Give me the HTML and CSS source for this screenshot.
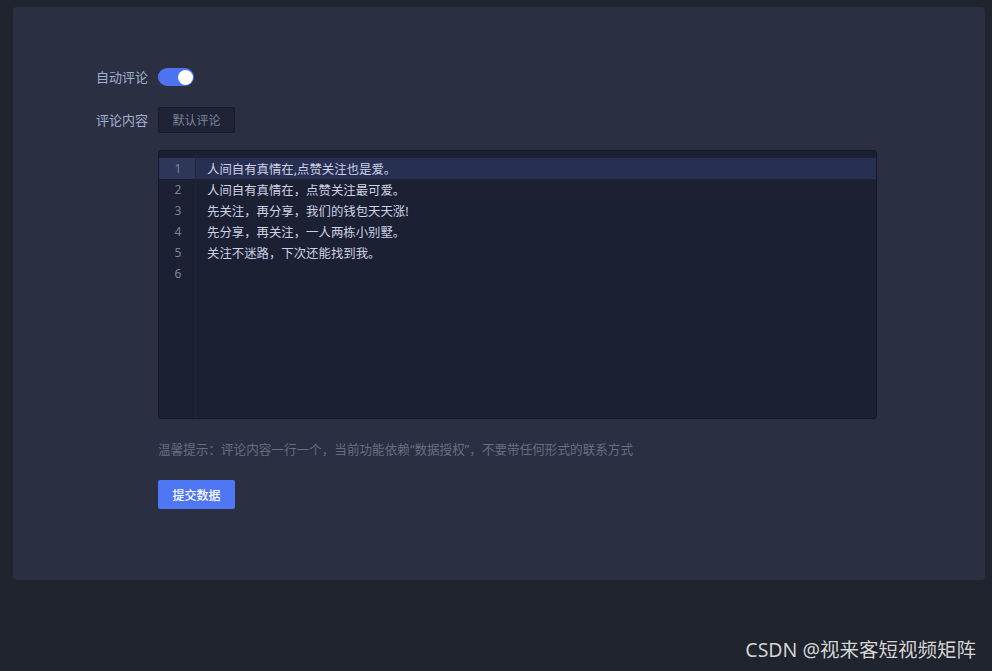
FILE: index.html
```html
<!DOCTYPE html>
<html lang="zh-CN">
<head>
<meta charset="utf-8">
<title>自动评论</title>
<link rel="stylesheet" href="styles.css">
</head>
<body>
<div class="card">
  <div class="form-row row-switch">
    <label class="label">自动评论</label>
    <div class="switch on"><span class="knob"></span></div>
  </div>
  <div class="form-row row-default">
    <label class="label">评论内容</label>
    <button class="btn-default">默认评论</button>
  </div>
  <div class="form-row row-editor">
    <div class="editor">
      <div class="gutter">
        <div class="ln active">1</div>
        <div class="ln">2</div>
        <div class="ln">3</div>
        <div class="ln">4</div>
        <div class="ln">5</div>
        <div class="ln">6</div>
      </div>
      <div class="lines">
        <div class="line active">人间自有真情在,点赞关注也是爱。</div>
        <div class="line">人间自有真情在，点赞关注最可爱。</div>
        <div class="line">先关注，再分享，我们的钱包天天涨!</div>
        <div class="line">先分享，再关注，一人两栋小别墅。</div>
        <div class="line">关注不迷路，下次还能找到我。</div>
        <div class="line"></div>
      </div>
    </div>
  </div>
  <div class="form-row row-hint">
    <p class="hint">温馨提示：评论内容一行一个，当前功能依赖“数据授权”，不要带任何形式的联系方式</p>
  </div>
  <div class="form-row row-submit">
    <button class="btn-primary">提交数据</button>
  </div>
</div>
<div class="watermark">CSDN @视来客短视频矩阵</div>
</body>
</html>
```

FILE: styles.css
```css
* { box-sizing: border-box; }
html, body {
  margin: 0;
  padding: 0;
  background: #20242f;
  font-family: "Noto Sans", "Noto Sans CJK SC", sans-serif;
  width: 992px;
  height: 671px;
  overflow: hidden;
}
.card {
  margin: 7px 7px 0 13px;
  height: 573px;
  background: #2a2f42;
  border-radius: 4px;
  padding: 54px 0 0 0;
}
.form-row {
  display: flex;
  align-items: center;
  padding-left: 145px;
}
.label {
  width: 135px;
  margin-left: -135px;
  padding-right: 10px;
  text-align: right;
  font-size: 13px;
  color: #a3b0cc;
  padding-bottom: 2px;
}
.row-switch { height: 32px; margin-bottom: 11px; }
.row-default { height: 32px; margin-bottom: 14px; }
.switch {
  width: 36px;
  height: 18px;
  border-radius: 9px;
  background: #4d72f2;
  position: relative;
}
.switch .knob {
  position: absolute;
  top: 1.5px;
  right: 1.5px;
  width: 15px;
  height: 15px;
  border-radius: 50%;
  background: #ffffff;
}
.btn-default {
  width: 77px;
  height: 26px;
  border: 1px solid #181c2a;
  border-radius: 2px;
  background: #1e2335;
  color: #7d8598;
  font-family: inherit;
  font-size: 12px;
  padding: 0;
}
.editor {
  width: 719px;
  height: 269px;
  background: #1c2033;
  border: 1px solid #151927;
  border-radius: 3px;
  display: flex;
  padding-top: 7px;
  font-size: 12.4px;
}
.gutter {
  width: 37px;
  border-right: 1px solid #222739;
  margin-top: -7px;
  padding-top: 7px;
}
.ln {
  height: 21px;
  padding-top: 1px;
  line-height: 20px;
  text-align: center;
  color: #7d8598;
  padding-left: 2px;
  font-size: 12px;
}
.ln.active { background: #2e365a; }
.lines { flex: 1; }
.line {
  height: 21px;
  padding-top: 2px;
  line-height: 19px;
  padding-left: 11px;
  color: #cdd2e4;
}
.line.active { background: #272f52; }
.row-hint { margin-top: 22px; }
.hint {
  margin: 0;
  font-size: 12.6px;
  line-height: 18px;
  color: #676e82;
}
.row-submit { margin-top: 21px; }
.btn-primary {
  width: 77px;
  height: 29px;
  border: none;
  border-radius: 2px;
  background: #4e76f5;
  color: #ffffff;
  font-family: inherit;
  font-size: 12px;
  font-weight: 500;
  padding: 0;
}
.watermark {
  position: absolute;
  right: 16px;
  top: 636px;
  font-size: 19.5px;
  line-height: 28px;
  color: #d6d6d6;
  text-shadow: 0 0 1px rgba(0,0,0,0.5);
  font-family: "Noto Sans", "Noto Sans CJK SC", sans-serif;
}
```
